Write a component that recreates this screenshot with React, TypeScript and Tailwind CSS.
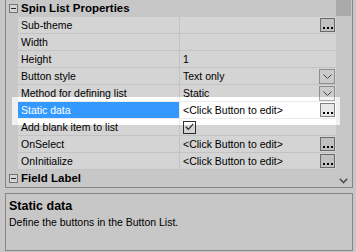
import React from 'react'

type Row = { label: string; value?: string; kind?: 'dots' | 'drop' | 'check'; selected?: boolean }

const ROWS: Row[] = [
  { label: 'Sub-theme', kind: 'dots' },
  { label: 'Width' },
  { label: 'Height', value: '1' },
  { label: 'Button style', value: 'Text only', kind: 'drop' },
  { label: 'Method for defining list', value: 'Static', kind: 'drop' },
  { label: 'Static data', value: '<Click Button to edit>', kind: 'dots', selected: true },
  { label: 'Add blank item to list', kind: 'check' },
  { label: 'OnSelect', value: '<Click Button to edit>', kind: 'dots' },
  { label: 'OnInitialize', value: '<Click Button to edit>', kind: 'dots' },
]

function Minus() {
  return (
    <span className="flex h-[9px] w-[9px] items-center justify-center border border-[#8c8c8c] bg-white">
      <span className="h-px w-[5px] bg-[#333]" />
    </span>
  )
}

function Category({ title }: { title: string }) {
  return (
    <div className="flex h-[17px] items-center bg-[#f0f0f0]">
      <div className="flex w-[12px] shrink-0 justify-center pl-[2px]">
        <Minus />
      </div>
      <span className="pl-[3px] text-[11.5px] font-bold">{title}</span>
    </div>
  )
}

function DotsButton() {
  return (
    <span className="flex h-[14px] w-[15px] items-end justify-center gap-[2px] border border-[#808080] bg-[#e8e8e8] pb-[2px]">
      <span className="h-[2px] w-[2px] bg-black" />
      <span className="h-[2px] w-[2px] bg-black" />
      <span className="h-[2px] w-[2px] bg-black" />
    </span>
  )
}

function DropButton() {
  return (
    <span className="flex h-[15px] w-[16px] items-center justify-center border border-[#adadad] bg-[#f4f4f4]">
      <svg width="9" height="5" viewBox="0 0 9 5">
        <path d="M0.5 0.5 L4.5 4.5 L8.5 0.5" fill="none" stroke="#555" strokeWidth="1" />
      </svg>
    </span>
  )
}

function Check() {
  return (
    <span className="flex h-[13px] w-[13px] items-center justify-center border border-[#333] bg-white">
      <svg width="9" height="8" viewBox="0 0 9 8">
        <path d="M0.8 3.8 L3.4 6.4 L8.2 0.8" fill="none" stroke="#333" strokeWidth="1.3" />
      </svg>
    </span>
  )
}

function PropRow({ row }: { row: Row }) {
  return (
    <div className="flex h-[17px]">
      <div className="w-[12px] shrink-0 bg-[#f0f0f0]" />
      <div
        className={`flex w-[161px] shrink-0 items-center border-b border-[#ebebeb] pl-[3px] ${
          row.selected ? 'bg-[#3399ff] text-white' : 'bg-white'
        }`}
      >
        {row.label}
      </div>
      <div className="w-px shrink-0 bg-[#ebebeb]" />
      <div className="flex min-w-0 flex-1 items-center justify-between border-b border-[#ebebeb] bg-white pl-[3px] pr-px">
        {row.kind === 'check' ? <Check /> : <span>{row.value ?? ''}</span>}
        {row.kind === 'dots' && <DotsButton />}
        {row.kind === 'drop' && <DropButton />}
      </div>
    </div>
  )
}

export default function App() {
  return (
    <div className="relative h-[252px] w-[356px] overflow-hidden bg-[#f0f0f0] font-['Liberation_Sans',Arial,sans-serif] text-[10.5px] leading-none text-black">
      <div className="flex h-full flex-col">
        {/* property grid */}
        <div className="ml-[5px] mr-[3px] flex h-[188px] shrink-0 border-x border-b border-[#a0a0a0]">
          <div className="flex min-w-0 flex-1 flex-col">
            <Category title="Spin List Properties" />
            {ROWS.map((r) => (
              <PropRow key={r.label} row={r} />
            ))}
            <Category title="Field Label" />
          </div>
          {/* scrollbar */}
          <div className="flex w-[16px] shrink-0 flex-col bg-[#f0f0f0]">
            <div className="h-[16px] w-[15px] bg-[#cdcdcd]" />
            <div className="flex-1" />
            <div className="flex h-[14px] items-center justify-start pl-[3px] pt-[2px]">
              <svg width="9" height="6" viewBox="0 0 9 6">
                <path d="M0.8 0.8 L4.5 4.5 L8.2 0.8" fill="none" stroke="#606060" strokeWidth="1.6" />
              </svg>
            </div>
          </div>
        </div>

        {/* description */}
        <div className="mx-[3px] ml-[5px] mt-[5px] h-[58px] border border-[#a0a0a0] px-[3px] pt-[6px]">
          <div className="text-[12.5px] font-bold">Static data</div>
          <div className="mt-[4px]">Define the buttons in the Button List.</div>
        </div>
      </div>

      {/* spotlight */}
      <div className="pointer-events-none absolute left-[12px] top-[97px] h-[28px] w-[328px] shadow-[0_0_0_600px_rgba(0,0,0,0.17)]" />
    </div>
  )
}
